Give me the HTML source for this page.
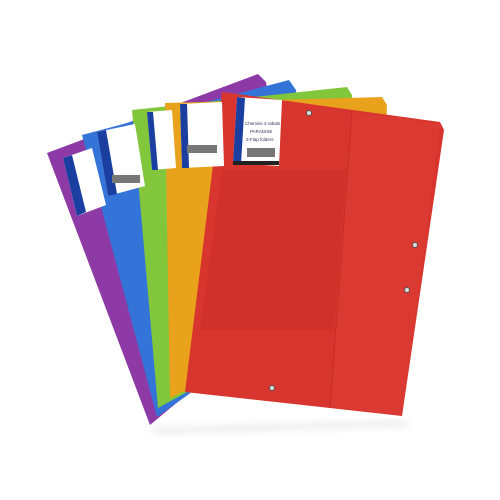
<!DOCTYPE html>
<html><head><style>body{margin:0;background:#fff}svg{display:block}</style></head><body>
<svg width="500" height="500" viewBox="0 0 500 500" xmlns="http://www.w3.org/2000/svg" font-family="Liberation Sans, sans-serif">
<defs><filter id="sh" x="-10%" y="-10%" width="130%" height="130%"><feGaussianBlur stdDeviation="4"/></filter></defs>
<polygon points="150,428 405,420 410,426 155,434" fill="#000" opacity="0.08" filter="url(#sh)"/>
<polygon points="47,153 258,74 266,82 300,300 150,425" fill="#8d3aa6"/>
<polygon points="82,135 289,80 296,90 320,300 157,417" fill="#3474d8"/>
<polygon points="132,110 347,87 352,95 355,300 158,408" fill="#82c63c"/>
<polygon points="165,103 382,97 387,105 380,300 170,398" fill="#e9a21c"/>
<polygon points="222,92 440,122 444,130 402,416 185,392" fill="#d8352e"/>
<polygon points="222,170 346,170 334,330 200,330" fill="#c22a24" opacity="0.35"/>
<polygon points="352,112 440,124 402,416 330,408" fill="#df433a" opacity="0.4"/>
<line x1="352" y1="112" x2="330" y2="408" stroke="#c02c26" stroke-width="0.8"/>
<g font-size="4" fill="#335">
<polygon points="63,158 92,148 106,205 77,216" fill="#fff"/>
<polygon points="63,158 72,155 86,212 77,216" fill="#1a3fa0"/>
<polygon points="97,132 135,124 145,186 108,196" fill="#fff"/>
<polygon points="97,132 106,130 117,194 108,196" fill="#1a3fa0"/>
<polygon points="147,112 172,110 176,168 152,170" fill="#fff"/>
<polygon points="147,112 153,112 158,170 152,170" fill="#1a3fa0"/>
<polygon points="180,104 222,102 224,166 182,168" fill="#fff"/>
<polygon points="180,104 187,104 189,168 182,168" fill="#1a3fa0"/>
<polygon points="237,97 282,100 279,166 233,163" fill="#fff"/>
<polygon points="237,97 245,98 241,164 233,163" fill="#1a3fa0"/>
<rect x="233" y="161" width="46" height="4" fill="#222"/>
<text x="245" y="125" font-size="4.5">Chemise 3 rabats</text><text x="250" y="133" font-size="4.5">PARADISE</text><text x="246" y="141" font-size="4.5">3-Flap folders</text>
<rect x="247" y="148" width="28" height="9" fill="#777"/>
<rect x="187" y="145" width="30" height="8" fill="#777"/>
<rect x="112" y="175" width="28" height="8" fill="#777"/>
</g>
<g fill="#ddd" stroke="#555" stroke-width="1">
<circle cx="309" cy="113" r="2.5"/><circle cx="415" cy="245" r="2.5"/><circle cx="407" cy="290" r="2.5"/><circle cx="272" cy="388" r="2.5"/>
</g>
</svg>
</body></html>
